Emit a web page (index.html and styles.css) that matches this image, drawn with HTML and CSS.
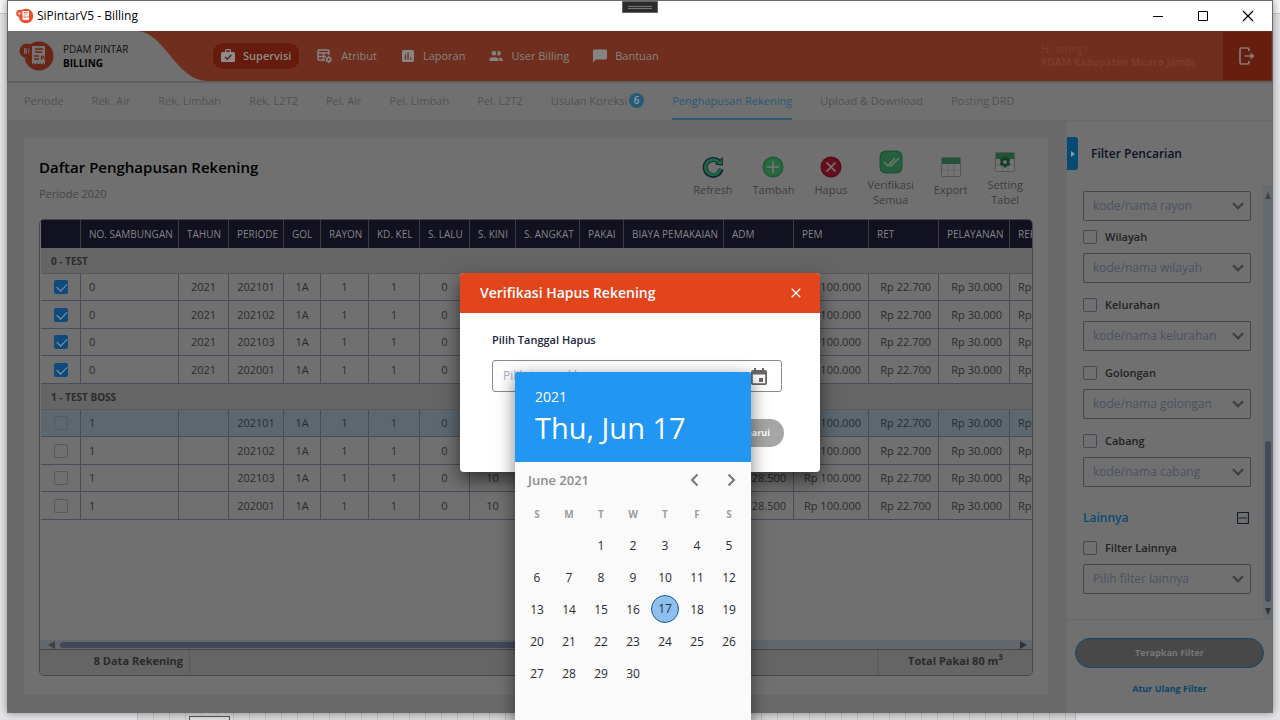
FILE: index.html
```html
<!DOCTYPE html>
<html lang="id">
<head>
<meta charset="utf-8">
<title>SiPintarV5 - Billing</title>
<link rel="stylesheet" href="styles.css">
</head>
<body>
<svg class="defs" width="0" height="0" aria-hidden="true">
  <symbol id="chev" viewBox="0 0 12 8"><path d="M1 1.2l5 5 5-5" fill="none" stroke="currentColor" stroke-width="2.2"/></symbol>
  <symbol id="logo" viewBox="0 0 36 32">
    <circle cx="20" cy="16" r="14.500" fill="currentColor"/>
    <circle cx="8" cy="11" r="7.500" fill="currentColor"/>
    <path d="M1.500 15a7.500 7.500 0 0 0 6 3.500" fill="none" stroke="var(--hole)" stroke-width=".6"/>
    <path d="M13 6h13v18.500l-1.600-1.500-1.600 1.500-1.600-1.500-1.600 1.500-1.700-1.500-1.700 1.500-1.600-1.500-1.600 1.500z" fill="var(--hole)"/>
    <path d="M16 9h8M16 12h7M15 16h5M15 19h5" stroke="currentColor" stroke-width="1.400"/>
    <path d="M22.500 20v-4h2v2h-2M26 20v-3h1.500v2h-1.500" fill="none" stroke="currentColor" stroke-width="1"/>
    <path d="M5.500 8.500v5h2v-2.500h-2h1.800V8.500zM9.800 8.500v5" fill="none" stroke="var(--hole)" stroke-width=".9"/>
  </symbol>
</svg>
<div class="desktop">
  <div class="strip"></div>
  <div class="grid-peek"><i></i></div>
  <div class="window">
    <div class="titlebar">
      <svg class="app-ico" width="18" height="16"><use href="#logo"/></svg>
      <span class="app-title">SiPintarV5 - Billing</span>
      <div class="grip"></div>
      <div class="winbtns">
        <button aria-label="Minimize"><svg width="12" height="12"><path d="M1 6.500h10" stroke="#000"/></svg></button>
        <button aria-label="Maximize"><svg width="12" height="12"><path d="M1.500 1.500h9v9h-9z" fill="none" stroke="#000"/></svg></button>
        <button aria-label="Close"><svg width="12" height="12"><path d="M1 1l10 10M11 1L1 11" stroke="#000" stroke-width="1.200"/></svg></button>
      </div>
    </div>
    <div class="app">
      <header class="top">
        <div class="brand">
          <svg class="swoosh" width="200" height="50"><path d="M0 0H130C158 3 168 50 200 50H0z"/></svg>
          <svg class="brand-ico" width="36" height="32"><use href="#logo"/></svg>
          <div class="brand-text"><span>PDAM PINTAR</span><b>BILLING</b></div>
        </div>
        <nav class="menu">
          <a href="#" class="on"><svg width="14" height="14" viewBox="0 0 14 14"><path fill="currentColor" d="M1.500 3H4V1.500Q4 0 5.500 0h3Q10 0 10 1.500V3h2.500Q14 3 14 4.500v7q0 1.500-1.500 1.500h-11Q0 13 0 11.500v-7Q0 3 1.500 3zM5.300 1.300V3h3.400V1.300z"/><path d="M4 8l2.200 2.200L10.300 6" fill="none" stroke="#661c0c" stroke-width="1.500"/></svg>Supervisi</a>
          <a href="#"><svg width="16" height="14" viewBox="0 0 16 14"><g fill="none" stroke="currentColor" stroke-width="1.500"><path d="M8 11H2.200Q1 11 1 9.800V2.200Q1 1 2.200 1h8.600Q12 1 12 2.200V6M1 4h11M1 7.500h8M6.500 4v7"/><circle cx="11.700" cy="10.500" r="1.900"/><path d="M11.700 7v1.500M11.700 12.500V14M8.700 8.800l1.300.7M13.400 11.500l1.300.7M8.700 12.200l1.300-.7M13.400 9.500l1.300-.7" stroke-width="1.100"/></g></svg>Atribut</a>
          <a href="#"><svg width="14" height="14" viewBox="0 0 14 14"><rect x="1" y="1" width="12" height="12" rx="1.500" fill="currentColor"/><path d="M4.500 5.500v5M7 3.500v7M9.700 8.500v2" stroke="#702e1e" stroke-width="1.300"/></svg>Laporan</a>
          <a href="#"><svg width="14" height="14" viewBox="0 0 14 14"><g fill="currentColor"><circle cx="5" cy="4.200" r="2.300"/><path d="M.5 12v-1.500Q.5 8.300 5 8.300t4.500 2.200V12zM8.300 2.200a2.300 2.300 0 1 1 0 4 3.600 3.600 0 0 0 0-4zM10.500 12v-1.500q0-1.200-1-2 4 .2 4 2V12z"/></g></svg>User Billing</a>
          <a href="#"><svg width="14" height="14" viewBox="0 0 14 14"><path fill="currentColor" d="M1.500.5h11Q14 .5 14 2v7q0 1.500-1.500 1.500H3L0 13.500V2Q0 .5 1.500.5z"/></svg>Bantuan</a>
        </nav>
        <div class="user"><span>Hi, string1</span><b>PDAM Kabupaten Muaro Jambi</b></div>
        <button class="logout" aria-label="Keluar"><svg width="18" height="20" viewBox="0 0 18 20"><path d="M11 5V3.500Q11 2 9.500 2h-6Q2 2 2 3.500v13Q2 18 3.500 18h6q1.500 0 1.500-1.500V15M6.500 10h9" fill="none" stroke="currentColor" stroke-width="1.700"/><path d="M12.500 6.500L16.500 10l-4 3.500z" fill="currentColor"/></svg></button>
      </header>
      <nav class="tabs">
        <a href="#">Periode</a><a href="#">Rek. Air</a><a href="#">Rek. Limbah</a><a href="#">Rek. L2T2</a><a href="#">Pel. Air</a><a href="#">Pel. Limbah</a><a href="#">Pel. L2T2</a><a href="#">Usulan Koreksi<span class="badge">6</span></a><a href="#" class="on">Penghapusan Rekening</a><a href="#">Upload &amp; Download</a><a href="#">Posting DRD</a>
      </nav>
      <div class="work">
        <main class="card">
          <div class="card-head">
            <div><h1>Daftar Penghapusan Rekening</h1><p>Periode 2020</p></div>
            <div class="tools">
              <button><svg width="24" height="24" viewBox="0 0 24 24"><path d="M18.800 8A8 8 0 1 0 20 14" fill="none" stroke="#14233c" stroke-width="5"/><path d="M14 9.500l7.800 1.200V2z" fill="#14233c"/><path d="M18.300 8A7.600 7.600 0 1 0 19.500 13.500" fill="none" stroke="#1c6a40" stroke-width="2.600"/><path d="M16 8.700l4.800.8V4.500z" fill="#1c6a40"/></svg>Refresh</button>
              <button><svg width="24" height="24" viewBox="0 0 24 24"><circle cx="12" cy="12" r="10.500" fill="#205a38"/><circle cx="12" cy="12" r="9" fill="#28693f"/><path d="M12 6v12M6 12h12" stroke="#777" stroke-width="1.700"/></svg>Tambah</button>
              <button><svg width="24" height="24" viewBox="0 0 24 24"><circle cx="12" cy="12" r="10.500" fill="#5a0a18"/><circle cx="12" cy="12" r="9" fill="#650f20"/><path d="M7.500 7.500l9 9M16.500 7.500l-9 9" stroke="#777" stroke-width="1.700"/></svg>Hapus</button>
              <button><svg width="24" height="24" viewBox="0 0 24 24"><rect x=".5" y=".5" width="23" height="23" rx="6" fill="#1d5435"/><rect x="2" y="2" width="20" height="20" rx="5" fill="#265f3d"/><path d="M5 12l4 4 7-8M10.500 14.500l1.500 1.500 8-8" fill="none" stroke="#777" stroke-width="1.400"/></svg>Verifikasi<br>Semua</button>
              <button><svg width="24" height="24" viewBox="0 0 24 24"><rect x="2.500" y="2.500" width="19" height="19" rx="1" fill="#747474" stroke="#555"/><path d="M3 3h18v6H3z" fill="#205337"/><path d="M3 15h18M9 9v12M15 9v12" stroke="#626262"/></svg>Export</button>
              <button><svg width="24" height="24" viewBox="0 0 24 24"><rect x="2.500" y="2.500" width="19" height="19" rx="1" fill="#747474" stroke="#555"/><path d="M3 3h18v6H3z" fill="#205337"/><path d="M3 15h18M9 9v12M15 9v12" stroke="#626262"/><circle cx="12" cy="12" r="3.200" fill="none" stroke="#123f28" stroke-width="2.600"/><path d="M12 6.500v2M12 15.500v2M7.200 9.200l1.800 1M15 13.800l1.800 1M7.200 14.800l1.800-1M15 10.200l1.800-1" stroke="#123f28" stroke-width="2.400"/></svg>Setting<br>Tabel</button>
            </div>
          </div>
          <div class="grid">
            <div class="grid-view">
              <table>
                <colgroup><col class="w40"><col class="w98"><col class="w50"><col class="w55"><col class="w37"><col class="w48"><col class="w51"><col class="w50"><col class="w46"><col class="w64"><col class="w44"><col class="w100"><col class="w70"><col class="w75"><col class="w70"><col class="w71"><col class="w98"></colgroup>
                <thead><tr><th></th><th>NO. SAMBUNGAN</th><th>TAHUN</th><th>PERIODE</th><th>GOL</th><th>RAYON</th><th>KD. KEL</th><th>S. LALU</th><th>S. KINI</th><th>S. ANGKAT</th><th>PAKAI</th><th>BIAYA PEMAKAIAN</th><th>ADM</th><th>PEM</th><th>RET</th><th>PELAYANAN</th><th>REK</th></tr></thead>
                <tbody id="rows"></tbody>
              </table>
            </div>
            <div class="hscroll"><i class="left"></i><span></span><i class="right"></i></div>
            <div class="grid-foot"><b class="count">8 Data Rekening</b><b class="total">Total Pakai 80 m<sup>3</sup></b></div>
          </div>
        </main>
        <aside class="side">
          <div class="side-head"><button class="fold" aria-label="Tutup filter"><i></i></button><h2>Filter Pencarian</h2></div>
          <div class="side-scroll">
            <div class="filters">
              <div class="drop first"><select aria-label="Rayon"><option>kode/nama rayon</option></select><svg width="12" height="8"><use href="#chev"/></svg></div>
              <label><input type="checkbox">Wilayah</label>
              <div class="drop"><select aria-label="Wilayah"><option>kode/nama wilayah</option></select><svg width="12" height="8"><use href="#chev"/></svg></div>
              <label><input type="checkbox">Kelurahan</label>
              <div class="drop"><select aria-label="Kelurahan"><option>kode/nama kelurahan</option></select><svg width="12" height="8"><use href="#chev"/></svg></div>
              <label><input type="checkbox">Golongan</label>
              <div class="drop"><select aria-label="Golongan"><option>kode/nama golongan</option></select><svg width="12" height="8"><use href="#chev"/></svg></div>
              <label><input type="checkbox">Cabang</label>
              <div class="drop"><select aria-label="Cabang"><option>kode/nama cabang</option></select><svg width="12" height="8"><use href="#chev"/></svg></div>
              <div class="section"><h3>Lainnya</h3><button aria-label="Ciutkan"><svg width="12" height="12"><path d="M.5 1.500q0-1 1-1h9q1 0 1 1v9q0 1-1 1h-9q-1 0-1-1zM2 6h8" fill="none" stroke="#101a30" stroke-width="1.200"/></svg></button></div>
              <label><input type="checkbox">Filter Lainnya</label>
              <div class="drop"><select aria-label="Filter Lainnya"><option>Pilih filter lainnya</option></select><svg width="12" height="8"><use href="#chev"/></svg></div>
            </div>
            <div class="vscroll"><i class="up"></i><span></span><i class="down"></i></div>
          </div>
          <div class="side-foot"><button class="apply">Terapkan Filter</button><a href="#">Atur Ulang Filter</a></div>
        </aside>
      </div>
      <div class="layer">
        <section class="dialog" role="dialog" aria-labelledby="dlg">
          <header><h2 id="dlg">Verifikasi Hapus Rekening</h2><button aria-label="Tutup"><svg width="10" height="10"><path d="M.7.7l8.600 8.600M9.300.7L.7 9.300" stroke="#fff" stroke-width="1.300"/></svg></button></header>
          <div class="dialog-body">
            <label for="tgl">Pilih Tanggal Hapus</label>
            <div class="date">
              <input id="tgl" type="text" placeholder="Pilih tanggal hapus">
              <button class="cal" aria-label="Kalender"><svg width="16" height="18" viewBox="0 0 16 18"><path fill="#666" fill-rule="evenodd" d="M2 2h1V0h2v2h6V0h2v2h1q2 0 2 2v11q0 2-2 2H2q-2 0-2-2V4Q0 2 2 2zM1.800 6.500V15q0 .3.300.3h11.800q.3 0 .3-.3V6.500zM8 10h4v4H8z"/></svg></button>
              <div class="picker">
                <div class="picked"><span>2021</span><strong>Thu, Jun 17</strong></div>
                <div class="month"><b>June 2021</b><button aria-label="Sebelumnya"><svg width="9" height="14"><path d="M7.500 1.500L2 7l5.500 5.500" fill="none" stroke="#757575" stroke-width="2"/></svg></button><button aria-label="Berikutnya"><svg width="9" height="14"><path d="M1.500 1.500L7 7l-5.500 5.500" fill="none" stroke="#757575" stroke-width="2"/></svg></button></div>
                <div class="days" id="days"></div>
              </div>
            </div>
            <button class="save">Perbarui</button>
          </div>
        </section>
      </div>
    </div>
  </div>
</div>
<script src="app.js"></script>
</body>
</html>
```
FILE: styles.css
```css
* { box-sizing: border-box; }
body { margin: 0; overflow: hidden; font: 12px/16px "Open Sans", "Noto Sans", sans-serif; color: #2b2b2b; }
button, input, select { font: inherit; color: inherit; }
button { border: 0; padding: 0; background: none; }
a { color: inherit; text-decoration: none; }
h1, h2, h3, p { margin: 0; }
svg { display: block; flex: none; }
.defs { position: absolute; }
.desktop { position: relative; height: 100vh; padding: 0 7px 7px; background: #e3e4e8; overflow: hidden; }
.strip { position: absolute; inset: 0 0 auto; height: 14px; background: #f7f7f7; border-bottom: 1px solid #ccc; }
.grid-peek { position: absolute; left: 137px; right: 204px; bottom: 0; height: 7px; border: solid #bbb; border-width: 0 1px; background: repeating-linear-gradient(90deg, #d9d7d9 0 15px, #c2c0c2 15px 16px); }
.grid-peek i { position: absolute; left: 51px; bottom: 0; width: 41px; height: 4px; background: #ddd; border: 1px solid #555; border-bottom: 0; }
.window { position: relative; display: flex; flex-direction: column; height: 100%; border: 1px solid #6b6b6b; border-bottom: 0; box-shadow: 0 0 8px rgba(0,0,0,.4); background: #6a6a6a; }

.titlebar { position: relative; display: flex; align-items: center; height: 30px; flex: none; background: #fff; color: #000; padding-left: 8px; }
.app-ico { color: #e8502c; --hole: #fff; }
.app-title { margin-left: 3px; font-size: 12px; }
.grip { position: absolute; top: 0; left: 50%; width: 36px; height: 12px; margin-left: -18px; background: linear-gradient(#777, #777) center 4px / 24px 1px no-repeat, linear-gradient(#777, #777) center 6px / 24px 1px no-repeat, #2b2c2e; border: 1px solid #666; }
.winbtns { display: flex; margin-left: auto; padding-right: 2px; }
.winbtns button { width: 45px; height: 30px; display: grid; place-items: center; }

.app { position: relative; flex: 1; min-height: 0; display: flex; flex-direction: column; }
.top { display: flex; align-items: center; height: 50px; flex: none; background: #702e1e; box-shadow: 0 1px 2px rgba(0,0,0,.3); z-index: 1; color: #858585; }
.brand { position: relative; display: flex; align-items: center; width: 205px; height: 50px; padding-left: 11px; color: #111; }
.swoosh { position: absolute; left: 0; top: 0; fill: #707070; }
.brand-ico { position: relative; color: #6a2515; --hole: #747474; }
.brand-text { position: relative; display: flex; flex-direction: column; margin-left: 8px; font-size: 10px; line-height: 14px; }
.brand-text b { font-weight: 700; color: #000; }
.menu { display: flex; gap: 8px; font-size: 11px; }
.menu a { display: flex; align-items: center; gap: 8px; height: 26px; padding: 0 8px; }
.menu .on { background: #661c0c; border-radius: 10px; font-weight: 600; color: #8c8c8c; margin-right: 2px; }
.user { display: flex; flex-direction: column; margin-left: auto; margin-right: 27px; line-height: 13px; font-size: 10px; color: #7e3c2b; }
.logout { align-self: stretch; width: 50px; display: grid; place-items: center; background: #661f0f; border: 1px solid #702e1e; color: #8a7a76; }

.tabs { display: flex; gap: 28px; height: 40px; flex: none; padding: 0 16px; background: #707070; border-bottom: 1px solid #696969; color: #525252; font-size: 11px; }
.tabs a { display: flex; align-items: center; height: 39px; padding-top: 2px; white-space: nowrap; border-bottom: 2px solid transparent; }
.tabs .on { color: #2a5a74; border-color: #2a5a74; }
.badge { width: 15px; height: 15px; margin-left: 2px; border-radius: 50%; background: #265b78; color: #8a9aa2; font-size: 10px; line-height: 15px; text-align: center; font-weight: 600; }

.work { flex: 1; min-height: 0; display: flex; background: #6a6a6a; }
.card { flex: 1; min-width: 0; display: flex; flex-direction: column; margin: 17px 19px 18px 16px; padding: 0 15px 19px; background: #707070; }
.card-head { display: flex; justify-content: space-between; height: 81px; flex: none; }
.card-head h1 { margin-top: 18px; font-size: 15px; line-height: 22px; font-weight: 600; color: #000; }
.card-head p { margin-top: 8px; color: #454545; font-size: 11px; }
.tools { display: flex; align-items: center; gap: 20px; margin-right: 10px; color: #3d3d3d; }
.tools button { display: flex; flex-direction: column; align-items: center; min-height: 48px; font-size: 11px; line-height: 15px; }
.tools svg { margin-bottom: 3px; }

.grid { flex: 1; min-height: 0; display: flex; flex-direction: column; border: 1px solid #474747; border-radius: 5px; overflow: hidden; }
.grid-view { flex: 1; min-height: 0; overflow: hidden; padding: 0 0 0 1px; }
table { width: 1067px; table-layout: fixed; border-collapse: separate; border-spacing: 0; }
.w37 { width: 37px; } .w40 { width: 40px; } .w44 { width: 44px; } .w46 { width: 46px; } .w48 { width: 48px; } .w50 { width: 50px; }
.w51 { width: 51px; } .w55 { width: 55px; } .w64 { width: 64px; } .w70 { width: 70px; } .w71 { width: 71px; } .w75 { width: 75px; }
.w98 { width: 98px; } .w100 { width: 100px; }
th, td { padding: 0; white-space: nowrap; }
th { height: 28px; padding-left: 8px; text-align: left; font-size: 10px; font-weight: 400; color: #858585; background: #11111f; border-right: 1px solid #3c3c3c; }
td { height: 27px; font-size: 11px; line-height: 14px; text-align: center; border-right: 1px solid #494d5b; border-bottom: 1px solid #494d5b; }
tr.tall td { height: 28px; }
td.l { text-align: left; padding-left: 8px; }
td.r { text-align: right; padding-right: 7px; }
tr.sel td { background: #5c6770; }
tr.group td { height: 26px; padding-left: 10px; text-align: left; font-size: 10px; font-weight: 700; background: #656565; border-bottom-color: #5a5a5a; }
td input { appearance: none; display: block; width: 14px; height: 14px; margin: 0 auto; border: 1px solid #555a5c; border-radius: 2px; }
td input:checked { border: 0; background: #10497c; }
td input:checked::after { content: ""; display: block; width: 9px; height: 5px; margin: 3px 0 0 3px; border: solid #8d9aa6; border-width: 0 0 1px 1px; transform: rotate(-45deg); }
.hscroll { display: flex; align-items: center; height: 9px; flex: none; padding: 0 5px 0 8px; gap: 5px; background: #61676c; }
.hscroll span { width: 560px; height: 6px; border-radius: 3px; background: #414957; }
.hscroll i { border: 4px solid transparent; }
.hscroll .left { border-left: 0; border-right: 7px solid #414141; }
.hscroll .right { margin-left: auto; border-right: 0; border-left: 7px solid #333; }
.grid-foot { display: flex; justify-content: space-between; height: 26px; flex: none; background: #656565; border-top: 1px solid #474747; font-size: 11px; line-height: 21px; }
.count { width: 150px; padding-right: 6px; text-align: right; border-right: 1px solid #5a5a5a; }
.total { width: 155px; text-align: center; border-left: 2px solid #5e5e5e; }
sup { font-size: 8px; line-height: 0; }

.side { width: 205px; flex: none; display: flex; flex-direction: column; background: #707070; }
.side-head { display: flex; align-items: center; gap: 13px; height: 33px; flex: none; margin: 16px 0 15px; color: #0c1226; }
.side-head h2 { font-size: 12px; font-weight: 600; }
.fold { width: 11px; height: 33px; background: #074a72; border-radius: 0 3px 3px 0; display: grid; place-items: center; }
.fold i { border: 3px solid transparent; border-left: 4px solid #8a9aa6; border-right: 0; }
.side-scroll { flex: 1; min-height: 0; display: flex; justify-content: space-between; border-bottom: 1px solid #686868; }
.filters { flex: 1; min-width: 0; padding: 6px 12px 0 16px; }
.filters label { display: flex; align-items: center; gap: 8px; height: 14px; margin-bottom: 9px; font-size: 11px; font-weight: 600; line-height: 14px; color: #222; }
.filters label input { appearance: none; width: 14px; height: 14px; margin: 0; border: 1px solid #41485a; border-radius: 2px; }
.drop { position: relative; height: 30px; margin-bottom: 15px; }
.drop.first { margin-bottom: 9px; }
.drop select { appearance: none; width: 100%; height: 30px; padding: 0 24px 0 9px; background: none; border: 1px solid #454545; border-radius: 2px; color: #4a5262; font-size: 12px; }
.drop svg { position: absolute; right: 7px; top: 11px; color: #3e3e3e; }
.section { display: flex; justify-content: space-between; align-items: center; height: 18px; margin: 22px 2px 14px 0; }
.section h3 { font-size: 12px; font-weight: 600; color: #0b4b70; }
.vscroll { width: 9px; display: flex; flex-direction: column; align-items: center; background: #666b71; padding: 7px 0 4px; }
.vscroll span { width: 6px; height: 161px; margin: auto 0 6px; border-radius: 3px; background: #454a5a; }
.vscroll i { border: 3px solid transparent; }
.vscroll .up { border-top: 0; border-bottom: 7px solid #444; }
.vscroll .down { border-bottom: 0; border-top: 7px solid #333; }
.side-foot { display: flex; flex-direction: column; align-items: center; height: 93px; flex: none; padding: 18px 8px 0; font-size: 9px; font-weight: 700; }
.apply { width: 100%; height: 30px; border: 1px solid #10496c; border-radius: 15px; background: #484848; color: #777; font-weight: 700; }
.side-foot a { margin-top: 14px; line-height: 14px; color: #0b4468; }

.layer { position: absolute; inset: 0; display: grid; place-items: center; z-index: 2; }
.dialog { width: 360px; background: #fff; border-radius: 4px; box-shadow: 0 8px 18px rgba(0,0,0,.55); }
.dialog header { display: flex; align-items: center; justify-content: space-between; height: 40px; padding: 0 19px 0 20px; background: #e2441c; color: #fff; border-radius: 4px 4px 0 0; }
.dialog header h2 { font-size: 14px; line-height: 18px; font-weight: 600; }
.dialog-body { display: flex; flex-direction: column; padding: 18px 36px 25px 32px; }
.dialog-body label { font-size: 11px; font-weight: 600; line-height: 18px; color: #20243f; }
.date { position: relative; width: 290px; margin: 11px 0 27px; }
.date input { display: block; width: 100%; height: 32px; padding: 0 10px; border: 1px solid #8a8a8a; border-radius: 3px; background: #fff; outline: 0; }
.date input::placeholder { color: #a3b1c8; opacity: 1; }
.cal { position: absolute; right: 15px; top: 8px; }
.save { align-self: flex-end; width: 92px; height: 28px; padding-right: 14px; text-align: right; border-radius: 14px; background: #a6a6a6; color: #fff; font-size: 9px; font-weight: 700; }
.picker { position: absolute; left: 23px; top: 12px; width: 236px; height: 400px; background: #fafafa; border-radius: 2px; box-shadow: 0 5px 18px rgba(0,0,0,.5); z-index: 3; }
.picked { height: 90px; padding: 15px 20px 0; background: #2196f3; border-radius: 2px 2px 0 0; color: #fff; display: flex; flex-direction: column; }
.picked span { font-size: 14px; line-height: 20px; }
.picked strong { font-size: 29px; line-height: 42px; font-weight: 400; }
.month { display: flex; align-items: center; height: 36px; padding: 0 15px 0 13px; }
.month b { flex: 1; font-size: 13px; font-weight: 600; color: #8b8b8b; }
.month button + button { margin-left: 28px; }
.days { display: grid; grid-template-columns: repeat(7, 32px); grid-auto-rows: 32px; padding: 0 6px; }
.days > * { display: grid; place-items: center; font-size: 12px; }
.days span { font-size: 10px; font-weight: 700; color: #9c9c9c; }
.days .today { width: 28px; height: 28px; margin: 1px 2px; border: 1px solid #265886; border-radius: 50%; background: #8dc0ef; }
```
FILE: app.js
```js
const periods = ["202101", "202102", "202103", "202001"];
const group = (title, no, year, picked) =>
  `<tr class="group"><td colspan="17">${title}</td></tr>` +
  periods.map((p, i) => `<tr class="${i % 2 ? "tall" : ""} ${!picked && i === 0 ? "sel" : ""}">
    <td><input type="checkbox" aria-label="Pilih ${p}" ${picked ? "checked" : ""}></td>
    <td class="l">${no}</td><td>${year}</td><td>${p}</td><td>1A</td><td>1</td><td>1</td><td>0</td><td>${!picked && i > 1 ? "10" : ""}</td>
    <td></td><td></td><td></td><td class="r">${!picked && i > 1 ? "Rp 28.500" : ""}</td><td class="r">Rp 100.000</td>
    <td class="r">Rp 22.700</td><td class="r">Rp 30.000</td><td class="l">Rp</td></tr>`).join("");
document.getElementById("rows").innerHTML = group("0 - TEST", 0, 2021, true) + group("1 - TEST BOSS", 1, "", false);

let cells = [..."SMTWTFS"].map(d => `<span>${d}</span>`).join("") + "<i></i><i></i>";
for (let d = 1; d <= 30; d++) cells += `<button class="${d === 17 ? "today" : ""}">${d}</button>`;
document.getElementById("days").innerHTML = cells;
```
